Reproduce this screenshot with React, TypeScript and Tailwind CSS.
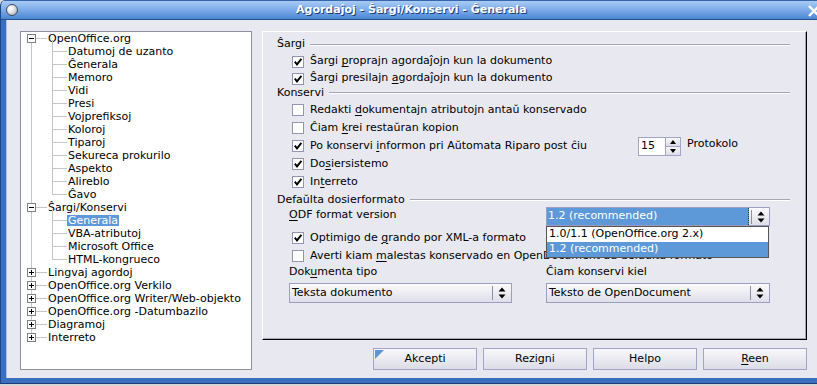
import React from 'react';

type RN = React.ReactNode;

function U({ children }: { children: RN }) {
  return <span className="underline decoration-1 underline-offset-[2px]">{children}</span>;
}

function Check({ checked }: { checked?: boolean }) {
  return (
    <span className="w-[12px] h-[12px] shrink-0 bg-white border border-[#9494b4] flex items-center justify-center">
      {checked && (
        <svg width="10" height="10" viewBox="0 0 10 10">
          <path d="M1.8 4.6 L4 7.4 L8.4 1.8" fill="none" stroke="#000" strokeWidth="1.9" />
        </svg>
      )}
    </span>
  );
}

function CbRow({ checked, children, h = 'h-[18px]' }: { checked?: boolean; children: RN; h?: string }) {
  return (
    <div className={`flex items-center ${h} pl-[15px] gap-[6px] whitespace-nowrap`}>
      <Check checked={checked} />
      <span>{children}</span>
    </div>
  );
}

function Heading({ children, h = 'h-[13px]' }: { children: RN; h?: string }) {
  return (
    <div className={`flex items-center ${h}`}>
      <span className="whitespace-nowrap">{children}</span>
      <div className="flex-1 ml-[5px] h-[2px] border-t border-[#a6a6ae] border-b border-b-white" />
    </div>
  );
}

function Arrows() {
  return (
    <svg width="8" height="14" viewBox="0 0 8 14">
      <path d="M4 1.5 L7.5 5.5 L0.5 5.5 Z" fill="#000" />
      <path d="M0.5 8.5 L7.5 8.5 L4 12.5 Z" fill="#000" />
    </svg>
  );
}

function Select({ className, children }: { className: string; children: RN }) {
  return (
    <div className={`flex h-[20px] border border-[#9d9dc2] bg-gradient-to-b from-[#fbfbfd] to-[#dedee9] ${className}`}>
      <div className="flex-1 flex items-center pl-[2px] whitespace-nowrap">{children}</div>
      <div className="w-px h-[14px] self-center bg-[#8d8da6]" />
      <div className="w-[18px] flex items-center justify-center">
        <Arrows />
      </div>
    </div>
  );
}

function Button({ children, isDefault }: { children: RN; isDefault?: boolean }) {
  return (
    <div className="relative w-[104px] h-[22px] border border-[#a3a3c6] bg-gradient-to-b from-[#f8f8fb] to-[#dcdce7] flex items-center justify-center">
      {isDefault && (
        <svg className="absolute left-[1px] top-[1px]" width="9" height="9" viewBox="0 0 9 9">
          <path d="M0 0 L9 0 L0 9 Z" fill="#5b94d8" />
        </svg>
      )}
      <span>{children}</span>
    </div>
  );
}

function Expander({ open }: { open?: boolean }) {
  return (
    <span className="absolute left-[6px] top-[2px] w-[9px] h-[9px] bg-white border border-[#808080] flex items-center justify-center">
      <span className="relative w-[5px] h-[5px]">
        <span className="absolute left-0 top-[2px] w-[5px] h-px bg-black" />
        {!open && <span className="absolute left-[2px] top-0 w-px h-[5px] bg-black" />}
      </span>
    </span>
  );
}

const tree: { label: string; children?: string[] }[] = [
  {
    label: 'OpenOffice.org',
    children: [
      'Datumoj de uzanto',
      'Ĝenerala',
      'Memoro',
      'Vidi',
      'Presi',
      'Vojprefiksoj',
      'Koloroj',
      'Tiparoj',
      'Sekureca prokurilo',
      'Aspekto',
      'Alireblo',
      'Ĝavo',
    ],
  },
  { label: 'Ŝargi/Konservi', children: ['Generala', 'VBA-atributoj', 'Microsoft Office', 'HTML-kongrueco'] },
  { label: 'Lingvaj agordoj' },
  { label: 'OpenOffice.org Verkilo' },
  { label: 'OpenOffice.org Writer/Web-objekto' },
  { label: 'OpenOffice.org -Datumbazilo' },
  { label: 'Diagramoj' },
  { label: 'Interreto' },
];

function Tree() {
  const rows: RN[] = [];
  tree.forEach((node, i) => {
    const first = i === 0;
    const last = i === tree.length - 1;
    const open = !!node.children;
    rows.push(
      <div key={node.label} className="relative h-[13px] flex items-center">
        <span
          className={`absolute left-[10px] w-px bg-[#c6c6c6] ${first ? 'top-[6px] bottom-0' : last ? 'top-0 h-[6px]' : 'top-0 bottom-0'}`}
        />
        <span className="absolute left-[15px] top-[6px] w-[11px] h-px bg-[#c6c6c6]" />
        {open && <span className="absolute left-[31px] top-[8px] bottom-0 w-px bg-[#c6c6c6]" />}
        <Expander open={open} />
        <span className="ml-[26px] px-[1px] whitespace-nowrap">{node.label}</span>
      </div>
    );
    node.children?.forEach((c, j) => {
      const lastChild = j === node.children!.length - 1;
      const selected = c === 'Generala';
      rows.push(
        <div key={node.label + c} className="relative h-[13px] flex items-center">
          <span className="absolute left-[10px] top-0 bottom-0 w-px bg-[#c6c6c6]" />
          <span className={`absolute left-[31px] top-0 w-px bg-[#c6c6c6] ${lastChild ? 'h-[7px]' : 'bottom-0'}`} />
          <span className="absolute left-[31px] top-[6px] w-[15px] h-px bg-[#c6c6c6]" />
          <span
            className={`ml-[46px] px-[1px] whitespace-nowrap leading-[11px] ${selected ? 'bg-[#5d99d8] text-white' : ''}`}
          >
            {c}
          </span>
        </div>
      );
    });
  });
  return (
    <div className="w-[232px] shrink-0 bg-white border border-[#8e8e9c] flex flex-col leading-[13px]">{rows}</div>
  );
}

function Panel() {
  return (
    <div className="flex-1 border-t border-l border-white border-r border-b border-r-black border-b-black shadow-[inset_-1px_-1px_0_#a8a8b8] pl-[14px] pr-[16px] pt-[6px] flex flex-col">
      <Heading>Ŝargi</Heading>
      <div className="h-[2px]" />
      <CbRow checked h="h-[17px]">
        Ŝargi <U>p</U>roprajn agordaĵojn kun la dokumento
      </CbRow>
      <CbRow checked h="h-[17px]">
        Ŝargi presilajn <U>a</U>gordaĵojn kun la dokumento
      </CbRow>
      <Heading h="h-[12px]">Konservi</Heading>
      <div className="h-[2px]" />
      <CbRow>
        Redakti <U>d</U>okumentajn atributojn antaŭ konservado
      </CbRow>
      <CbRow>
        Ĉiam <U>k</U>rei restaŭran kopion
      </CbRow>
      <div className="flex items-center h-[18px] pl-[15px] gap-[6px] whitespace-nowrap">
        <Check checked />
        <span className="w-[322px]">
          Po konservi <U>i</U>nformon pri Aŭtomata Riparo post ĉiu
        </span>
        <div className="flex h-[19px] mt-[1px]">
          <div className="w-[28px] h-full bg-white border border-[#a4a4c8] flex items-center pl-[2px]">15</div>
          <div className="w-[15px] h-full flex flex-col border border-l-0 border-[#a4a4c8]">
            <div className="flex-1 bg-gradient-to-b from-[#f8f8fb] to-[#dcdce7] flex items-center justify-center border-b border-[#a4a4c8]">
              <svg width="6" height="4" viewBox="0 0 6 4">
                <path d="M3 0 L6 4 L0 4 Z" fill="#000" />
              </svg>
            </div>
            <div className="flex-1 bg-gradient-to-b from-[#f8f8fb] to-[#dcdce7] flex items-center justify-center">
              <svg width="6" height="4" viewBox="0 0 6 4">
                <path d="M0 0 L6 0 L3 4 Z" fill="#000" />
              </svg>
            </div>
          </div>
        </div>
        <span className="-mt-[4px]">Protokolo</span>
      </div>
      <CbRow checked>
        Do<U>s</U>iersistemo
      </CbRow>
      <CbRow checked>
        In<U>t</U>erreto
      </CbRow>
      <div className="h-[2px]" />
      <Heading h="h-[14px]">Defaŭlta dosierformato</Heading>
      <div className="flex items-center h-[19px] pl-[12px]">
        <span className="w-[257px] whitespace-nowrap -mt-[2px]">
          <U>O</U>DF format version
        </span>
        <div className="relative w-[224px] h-[19px]">
          <div className="flex h-[19px] border border-[#9d9dc2] bg-gradient-to-b from-[#fbfbfd] to-[#dedee9]">
            <div className="flex-1 flex items-center pl-[1px] bg-[#5d99d8] text-white border-r border-dotted border-r-[#333] whitespace-nowrap">
              1.2 (recommended)
            </div>
            <div className="w-px h-[14px] ml-[2px] self-center bg-[#8d8da6]" />
            <div className="w-[17px] flex items-center justify-center">
              <Arrows />
            </div>
          </div>
          <div className="absolute left-0 top-[19px] w-[223px] z-10 bg-white border border-[#555] flex flex-col">
            <div className="h-[15px] flex items-center pl-[2px] whitespace-nowrap">1.0/1.1 (OpenOffice.org 2.x)</div>
            <div className="h-[15px] flex items-center pl-[2px] whitespace-nowrap bg-[#5d99d8] text-white">
              1.2 (recommended)
            </div>
          </div>
        </div>
      </div>
      <div className="h-[3px]" />
      <CbRow checked>
        Optimigo de <U>g</U>rando por XML-a formato
      </CbRow>
      <CbRow>
        Averti kiam <U>m</U>alestas konservado en OpenDocument aŭ defaŭlta formato
      </CbRow>
      <div className="flex items-center h-[14px] pl-[12px] whitespace-nowrap">
        <span className="w-[257px]">
          Dok<U>u</U>menta tipo
        </span>
        <span>Ĉiam konservi kiel</span>
      </div>
      <div className="h-[4px]" />
      <div className="flex pl-[12px]">
        <Select className="w-[223px]">Teksta dokumento</Select>
        <div className="w-[34px]" />
        <Select className="w-[224px]">Teksto de OpenDocument</Select>
      </div>
    </div>
  );
}

export default function App() {
  return (
    <div className="w-[817px] h-[386px] bg-[#d6d6d6] overflow-hidden font-['DejaVu_Sans',sans-serif] text-[11px] text-black">
      <div className="h-[384px] flex flex-col bg-[#3a6fc0] rounded-tl-[6px] overflow-hidden border-l border-l-[#1e4688] border-b border-b-[#1a3d78]">
        <div className="h-[20px] shrink-0 flex items-center bg-gradient-to-b from-[#a8cbf5] via-[#7babe8] to-[#4c86d2] border-t border-t-[#3565ad] border-b border-b-[#23508f]">
          <span className="ml-[5px] w-[12px] h-[12px] rounded-full border border-[#3d4a60] bg-[radial-gradient(circle_at_35%_35%,#ffffff_0%,#e4e4e8_40%,#9a9aa4_100%)]" />
          <span className="ml-[278px] font-bold text-white text-[11px] whitespace-nowrap [text-shadow:1px_1px_0_#1c3b70]">
            Agordaĵoj - Ŝargi/Konservi - Ĝenerala
          </span>
          <div className="flex-1" />
          <svg className="-mr-[4px] mt-[1px]" width="14" height="12" viewBox="0 0 14 12">
            <path d="M2 1 L12 11 M12 1 L2 11" stroke="#ffffff" strokeWidth="2.4" />
          </svg>
        </div>
        <div className="flex-1 ml-[5px] mb-[5px] bg-[#e8e8f0] border-l border-l-[#a9c2e6] flex pt-[11px] pb-[8px] pl-[13px] pr-[10px] gap-[10px]">
          <Tree />
          <div className="flex-1 flex flex-col">
            <Panel />
            <div className="mt-[8px] h-[22px] flex justify-end gap-[6px]">
              <Button isDefault>Akcepti</Button>
              <Button>Rezigni</Button>
              <Button>Helpo</Button>
              <Button>
                <U>R</U>een
              </Button>
            </div>
          </div>
        </div>
      </div>
    </div>
  );
}
